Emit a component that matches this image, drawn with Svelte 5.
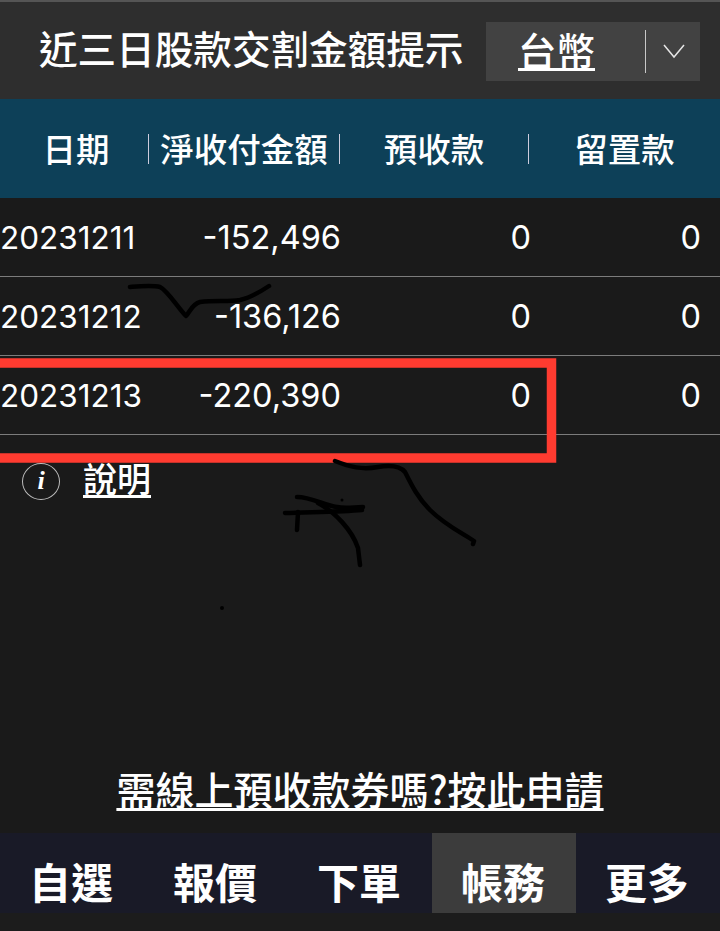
<script>
  const rows = [
    { date: '20231211', net: '-152,496', pre: '0', hold: '0' },
    { date: '20231212', net: '-136,126', pre: '0', hold: '0' },
    { date: '20231213', net: '-220,390', pre: '0', hold: '0' }
  ];
  const tabs = ['自選', '報價', '下單', '帳務', '更多'];
  const strokes = [
    'M130 287 C142 286 152 285 160 287 C168 291 178 308 186 316 C190 312 192 304 200 302 C215 300 228 302 240 300 C250 298 260 292 269 286',
    'M335 461 C350 467 362 470 378 467 C390 465 400 466 405 472 C412 486 418 498 430 510 C445 525 462 533 474 541 L473 544',
    'M297 497 C312 497 325 506 337 507 C345 509 355 507 363 507',
    'M285 513 C305 512 340 512 362 510',
    'M298 512 L297 530',
    'M318 503 C335 512 352 530 358 548 L360 565'
  ];
</script>

<div class="page">
  <header class="top">
    <h1>近三日股款交割金額提示</h1>
    <div class="select">
      <span class="cur">台幣</span>
      <span class="sep"></span>
      <svg class="chev" width="24" height="16" viewBox="0 0 24 16">
        <path d="M2 2 L12 14 L22 2" fill="none" stroke="#e6e6e6" stroke-width="1.5" />
      </svg>
    </div>
  </header>

  <div class="thead">
    <div class="th date">日期</div>
    <div class="th net">淨收付金額</div>
    <div class="th pre">預收款</div>
    <div class="th hold">留置款</div>
  </div>

  {#each rows as r}
    <div class="row">
      <span class="date">{r.date}</span>
      <span class="net">{r.net}</span>
      <span class="pre">{r.pre}</span>
      <span class="hold">{r.hold}</span>
    </div>
  {/each}

  <div class="note">
    <span class="info">i</span>
    <span class="note-link">說明</span>
  </div>

  <div class="spacer">
    <span class="apply">需線上預收款券嗎?按此申請</span>
  </div>

  <nav class="tabs">
    {#each tabs as t, i}
      <div class="tab" class:active={i === 3}>{t}</div>
    {/each}
  </nav>
  <div class="bottom"></div>

  <!-- hand drawn markup on top of the screenshot -->
  <svg class="markup" width="720" height="931" viewBox="0 0 720 931">
    <path d="M-10 363 H551.5 V458 H-10" fill="none" stroke="#ff3b30" stroke-width="9.5" />
    {#each strokes as d}
      <path {d} fill="none" stroke="#000" stroke-width="4.5" stroke-linecap="round" stroke-linejoin="round" />
    {/each}
    <circle cx="342" cy="500" r="1.5" fill="#000" />
    <circle cx="222" cy="608" r="2" fill="#000" />
  </svg>
</div>

<style>
  :global(body) {
    margin: 0;
    background: #1a1a1a;
  }
  .page {
    position: relative;
    width: 720px;
    height: 931px;
    overflow: hidden;
    display: flex;
    flex-direction: column;
    background: #1a1a1a;
    color: #fff;
    font-family: Inter, "Noto Sans CJK TC", sans-serif;
  }
  .top {
    height: 99px;
    box-sizing: border-box;
    border-top: 2px solid #555;
    background: #2e2e2e;
    display: flex;
    align-items: center;
    padding-left: 39px;
  }
  h1 {
    margin: 0;
    width: 447px;
    font-size: 38.6px;
    line-height: 50px;
    font-weight: 500;
    font-family: "Noto Sans CJK TC", sans-serif;
    white-space: nowrap;
    padding-bottom: 7px;
  }
  .select {
    width: 214px;
    height: 59px;
    background: #424242;
    display: flex;
    align-items: center;
    margin-top: 1px;
  }
  .cur {
    margin-left: 32px;
    width: 127px;
    font-size: 38.5px;
    line-height: 50px;
    font-weight: 500;
    font-family: "Noto Sans CJK TC", sans-serif;
    text-decoration: underline;
    text-underline-offset: 2px;
    padding-bottom: 4px;
  }
  .sep {
    width: 1px;
    height: 43px;
    background: #c8c8c8;
  }
  .chev {
    margin-left: 16px;
  }
  .thead {
    height: 99px;
    background: #0d4058;
    display: grid;
    grid-template-columns: 148px 192px 189px 191px;
    align-items: center;
    font-family: "Noto Sans CJK TC", sans-serif;
    font-size: 33.5px;
    font-weight: 500;
  }
  .th {
    height: 30px;
    line-height: 30px;
    white-space: nowrap;
    display: flex;
    align-items: center;
    justify-content: center;
    box-sizing: border-box;
    padding-bottom: 2px;
  }
  .th.date {
    padding-left: 4px;
  }
  .th.net {
    border-left: 1px solid #ccd;
    border-right: 1px solid #ccd;
  }
  .th.pre {
    border-right: 1px solid #ccd;
  }
  .row {
    height: 79px;
    box-sizing: border-box;
    border-bottom: 1px solid #7c7c7c;
    display: grid;
    grid-template-columns: 148px 193px 190px 170px;
    align-items: center;
    font-size: 32.5px;
    font-weight: 400;
  }
  .row span {
    text-align: right;
  }
  .row .date {
    text-align: left;
    font-size: 31.5px;
    white-space: nowrap;
  }
  .note {
    display: flex;
    align-items: center;
    padding: 28px 0 0 22px;
    gap: 23px;
    height: 36px;
  }
  .info {
    width: 38px;
    height: 37px;
    box-sizing: border-box;
    border: 1.5px solid #bbb;
    border-radius: 50%;
    display: flex;
    align-items: center;
    justify-content: center;
    font-family: "Liberation Serif", serif;
    font-style: italic;
    font-weight: 700;
    font-size: 26px;
  }
  .note-link {
    font-family: "Noto Sans CJK TC", sans-serif;
    font-size: 34px;
    font-weight: 500;
    line-height: 36px;
    text-decoration: underline;
    text-underline-offset: 3px;
    margin-top: -6px;
  }
  .spacer {
    flex: 1;
    display: flex;
    align-items: flex-end;
    justify-content: center;
    padding-bottom: 20px;
  }
  .apply {
    font-family: "Noto Sans CJK TC", sans-serif;
    font-size: 39px;
    font-weight: 500;
    line-height: 50px;
    text-decoration: underline;
    text-underline-offset: 3px;
    white-space: nowrap;
  }
  .tabs {
    height: 80px;
    flex: none;
    background: #191a27;
    display: grid;
    grid-template-columns: repeat(5, 144px);
    font-family: "Noto Sans CJK TC", sans-serif;
    font-size: 42px;
    font-weight: 700;
    line-height: 50px;
  }
  .tab {
    display: flex;
    align-items: center;
    justify-content: center;
    padding-top: 16px;
    padding-right: 2px;
  }
  .tab.active {
    background: #3c3c3c;
  }
  .bottom {
    height: 18px;
    flex: none;
    background: #1c1c1c;
  }
  .markup {
    position: absolute;
    left: 0;
    top: 0;
    pointer-events: none;
  }
</style>
